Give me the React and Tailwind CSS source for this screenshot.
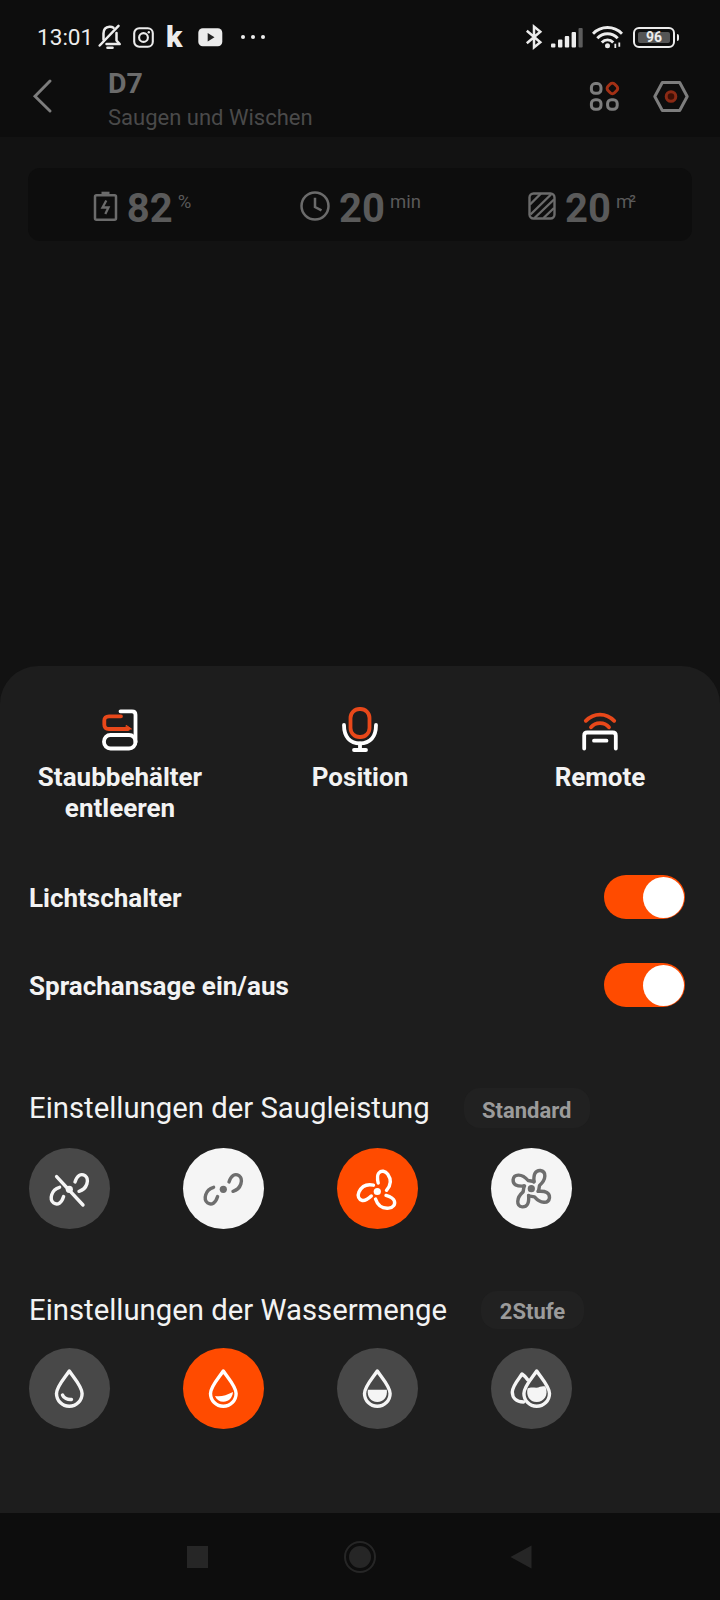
import { useState } from 'react';

const BLADE_2 = 'M46 34 C48 27.5 52 25 56 27.7 C60.5 31 58.5 41 50 43.3';
const BLADE_3 = 'M41.2 35 C40.3 31 39.8 27.3 41.8 25 C44.3 22.2 48.3 22.8 50.8 26.3 C54.8 32 53.8 37.5 49.5 42.3';
const BLADE_4 = 'M43 34 C42.3 26 44.5 22.3 49.3 22.5 C55.5 23.3 55.5 31.5 48.5 37.5 L47.5 43.4';
const DROP = 'M40.3 23 C36 29.5 27.5 38.5 27.5 45.5 A12.8 12.8 0 0 0 53.1 45.5 C53.1 38.5 44.6 29.5 40.3 23Z';

function RoundIcon({ children }) {
  return (
    <svg viewBox="0 0 81 81" className="w-full h-full" fill="none" stroke="currentColor" strokeWidth="3.4" strokeLinecap="round" strokeLinejoin="round">
      {children}
    </svg>
  );
}

function Fan({ blade, angles, cx = 40.3, cy, slash }) {
  return (
    <RoundIcon>
      {angles.map((a) => (
        <path key={a} d={blade} transform={`rotate(${a} ${cx} ${cy})`} />
      ))}
      <circle cx="40.3" cy={cy} r="3.6" fill="currentColor" stroke="none" />
      {slash && <path d="M27.6 28.6 L54 57" />}
    </RoundIcon>
  );
}

const SUCTION = [
  { id: 'Aus', style: 'bg-[#484848] text-[#f5f5f5]', icon: <Fan blade={BLADE_2} angles={[0, 180]} cy={41.3} slash /> },
  { id: 'Leise', style: 'bg-[#f5f5f5] text-[#6e6e6e]', icon: <Fan blade={BLADE_2} angles={[0, 180]} cy={41.3} /> },
  { id: 'Standard', style: 'bg-[#ff4b00] text-white', icon: <Fan blade={BLADE_3} angles={[0, 120, 240]} cx={41.5} cy={43.5} /> },
  { id: 'Turbo', style: 'bg-[#f5f5f5] text-[#6e6e6e]', icon: <Fan blade={BLADE_4} angles={[0, 90, 180, 270]} cy={40.7} /> },
];

const WATER = [
  {
    id: '1Stufe',
    style: 'bg-[#484848] text-[#f5f5f5]',
    icon: (
      <RoundIcon>
        <path d={DROP} />
        <path d="M33.5 47 C34.7 50 38.5 51.8 42.5 51.5" />
      </RoundIcon>
    ),
  },
  {
    id: '2Stufe',
    style: 'bg-[#ff4b00] text-white',
    icon: (
      <RoundIcon>
        <path d={DROP} />
        <path d="M32 48 C38 49 43 47.5 50 44 C49.5 50 45.5 53.8 40.5 53.8 C36.5 53.8 33.5 51.8 32 48Z" fill="currentColor" stroke="none" />
      </RoundIcon>
    ),
  },
  {
    id: '3Stufe',
    style: 'bg-[#484848] text-[#f5f5f5]',
    icon: (
      <RoundIcon>
        <path d={DROP} />
        <path d="M30.8 41.8 H49.8 C50.8 49 46.6 54 40.3 54 C34 54 29.8 49 30.8 41.8Z" fill="currentColor" stroke="none" />
      </RoundIcon>
    ),
  },
  {
    id: '4Stufe',
    style: 'bg-[#484848] text-[#f5f5f5]',
    icon: (
      <RoundIcon>
        <path d="M36.5 31.5 C34.8 29 32.5 27 31 26 C28.5 30 21.5 37.5 21.3 44 C21.3 49.5 25 54 32.5 54" />
        <path d={DROP} transform="translate(5.4 0)" />
        <path d="M36.6 40.5 C41 38 45 41 49 38.8 C51 38 53 38 54.4 38.5 C58 47 53 54 45.7 54 C38.5 54 34.8 47.5 36.6 40.5Z" fill="currentColor" stroke="none" />
      </RoundIcon>
    ),
  },
];

function StatusBar() {
  return (
    <div className="h-[56px] pt-[18px] pl-[37px] flex items-center text-[#ececec]">
      <span className="text-[22.6px] leading-[38px] w-[61px] pt-px">13:01</span>
      <svg className="w-[25px] h-[26px]" viewBox="0 0 25 26" fill="none" stroke="currentColor" strokeWidth="2.5" strokeLinecap="round" strokeLinejoin="round">
        <path d="M5.5 15.5 V9.5 C5.5 5 8 3 11.5 2.7 C13.3 2.6 14.5 3 15.5 3.7" />
        <path d="M18.5 9 V16.5 L21.7 20 H8.5" />
        <path d="M20.5 1.8 L1.7 21.5" />
        <path d="M9.5 23.7 H14.5" strokeWidth="2.6" />
      </svg>
      <svg className="w-[21px] h-[21px] ml-[10px]" viewBox="0 0 21 21" fill="none" stroke="currentColor" strokeWidth="2.1">
        <rect x="1.2" y="1.2" width="18.6" height="18.6" rx="5" />
        <circle cx="10.5" cy="10.5" r="4.4" />
        <circle cx="15.8" cy="5.2" r="1.2" fill="currentColor" stroke="none" />
      </svg>
      <span className="ml-[12px] w-[20px] text-[30px] leading-[38px] font-black">k</span>
      <svg className="w-[25px] h-[19px] ml-[12px]" viewBox="0 0 25 19">
        <rect x="0.3" y="0.3" width="24" height="18" rx="4.5" fill="currentColor" />
        <path d="M9.7 5 L16.5 9.2 L9.7 13.4Z" fill="#222" />
      </svg>
      <div className="flex gap-[6px] ml-[18px]">
        <span className="w-1 h-1 rounded-full bg-[#ececec]" />
        <span className="w-1 h-1 rounded-full bg-[#ececec]" />
        <span className="w-1 h-1 rounded-full bg-[#ececec]" />
      </div>
      <div className="ml-auto mr-[41px] flex items-center">
        <svg className="w-[18px] h-[26px]" viewBox="0 0 18 26" fill="none" stroke="currentColor" strokeWidth="2.5" strokeLinejoin="miter">
          <path d="M1.8 6.8 L15.3 18.3 L9 23.4 V2.6 L15.3 7.7 L1.8 19.2" />
        </svg>
        <svg className="w-[32px] h-[21px] ml-[8px]" viewBox="0 0 32 21" fill="currentColor">
          <rect x="0" y="16.5" width="4.4" height="4" rx="1" />
          <rect x="7" y="12.5" width="4.4" height="8" rx="1" />
          <rect x="13.8" y="9" width="4.4" height="11.5" rx="1" />
          <rect x="20.6" y="5" width="4.4" height="15.5" rx="1" />
          <rect x="27.5" y="1" width="4.2" height="19.5" rx="1" fill="#5c5c5c" />
        </svg>
        <svg className="w-[31px] h-[24px] ml-[9px]" viewBox="0 0 31 24" fill="none" stroke="currentColor" strokeWidth="2.9">
          <path d="M1 8.7 C9 0.5 22 0.5 30 8.7" />
          <path d="M5.3 13.3 C11 7.3 20 7.3 25.7 13.3" />
          <path d="M9.8 17.5 C13 14 18 14 21.2 17.5" />
          <circle cx="15.5" cy="20.8" r="2.5" fill="currentColor" stroke="none" />
          <path d="M23.3 23 V18.7 M27.3 17.5 V21.8" strokeWidth="1.8" />
        </svg>
        <div className="ml-[10px] w-[42px] h-[21px] border-2 border-[#ececec] rounded-md p-[3px] flex">
          <div className="flex-1 bg-[#555] rounded-xs flex items-center justify-center text-[14px] leading-none font-bold">96</div>
        </div>
        <span className="ml-[2px] w-[2px] h-[7px] bg-[#ececec] rounded-r" />
      </div>
    </div>
  );
}

function Header() {
  return (
    <header className="h-[81px] flex items-center pl-[32px] pr-[31px]">
      <svg className="w-[20px] h-[34px] -mt-px" viewBox="0 0 20 34" fill="none" stroke="#7d7d7d" strokeWidth="2.9" strokeLinecap="round">
        <path d="M18 2 L3 17.3 L18 32" />
      </svg>
      <div className="ml-[56px] mt-2">
        <h1 className="text-[28.5px] leading-[34px] font-bold text-[#6b6b6b]">D7</h1>
        <p className="text-[22px] leading-[34px] text-[#4a4a4a]">Saugen und Wischen</p>
      </div>
      <svg className="w-[32px] h-[33px] ml-auto" viewBox="0 0 32 33" fill="none" stroke="#7d7d7d" strokeWidth="3">
        <rect x="2.4" y="3.6" width="9.6" height="9.6" rx="3.8" />
        <rect x="18.8" y="3.8" width="9.2" height="9.2" rx="3" stroke="#a33015" transform="rotate(45 23.4 8.4)" />
        <rect x="2.4" y="19.7" width="9.6" height="9.6" rx="3.8" />
        <rect x="18.6" y="19.7" width="9.6" height="9.6" rx="3.8" />
      </svg>
      <svg className="w-[36px] h-[33px] ml-[32px]" viewBox="0 0 36 33" fill="none" stroke="#7d7d7d" strokeWidth="3" strokeLinejoin="round">
        <path d="M1.8 16.5 L9.3 2.5 H26.7 L34.2 16.5 L26.7 30.5 H9.3Z" />
        <circle cx="18" cy="16.5" r="4.8" stroke="#8a2a15" fill="#3d0f05" />
      </svg>
    </header>
  );
}

function Stat({ icon, value, unit }) {
  return (
    <div className="flex items-start justify-center text-[#5a5a5a]">
      <div className="mt-[23px] mr-[9px]">{icon}</div>
      <span className="mt-[21px] text-[40px] leading-[40px] font-bold">{value}</span>
      <span className="mt-[24px] ml-[5px] text-[18.5px] leading-[21px]">{unit}</span>
    </div>
  );
}

function Stats() {
  return (
    <div className="mt-[31px] mx-[28px] h-[73px] pl-1 rounded-xl bg-[#0d0d0d] grid grid-cols-[220px_217px_1fr]">
      <Stat
        value="82"
        unit="%"
        icon={
          <svg className="w-[25px] h-[31px]" viewBox="0 0 25 31" fill="none" stroke="#6b6b6b" strokeWidth="2.5">
            <rect x="2" y="4.2" width="21" height="24.6" rx="1.5" />
            <path d="M8.5 2.2 H16.5" strokeWidth="3" />
            <path d="M13.3 9.5 L9.5 16.5 H15.5 L12.3 23" strokeWidth="2.3" />
          </svg>
        }
      />
      <Stat
        value="20"
        unit="min"
        icon={
          <svg className="w-[30px] h-[30px]" viewBox="0 0 30 30" fill="none" stroke="#6b6b6b" strokeWidth="2.5">
            <circle cx="15" cy="15" r="13.5" />
            <path d="M15 6.8 V16 L21.5 19.3" />
          </svg>
        }
      />
      <Stat
        value="20"
        unit={<span className="tracking-[-3px]">m²</span>}
        icon={
          <svg className="w-[28px] h-[30px]" viewBox="0 0 28 30" fill="none" stroke="#6b6b6b" strokeWidth="2.4">
            <rect x="1.5" y="2.5" width="25" height="25" rx="4" />
            <path d="M2 13.5 L13 2.5 M2.5 23.5 L23 3.5 M6.5 27 L26 8.5 M15.5 27 L26 17" />
          </svg>
        }
      />
    </div>
  );
}

const ACTIONS = [
  {
    label: 'Staubbehälter entleeren',
    icon: (
      <svg className="w-[36px] h-[42px]" viewBox="0 0 36 42" fill="none" stroke="#fff" strokeWidth="3.8" strokeLinecap="round" strokeLinejoin="round">
        <path d="M18.5 2.3 H30 Q33.5 2.3 33.5 5.8 V33" />
        <rect x="2" y="26" width="31.5" height="13.5" rx="6.5" />
        <path d="M19 7.3 H7 Q2.3 7.3 2.3 11.5 V15.5 Q2.3 20 7 20 H26" stroke="#e8481a" />
        <path d="M24.5 16.5 L29.5 20 H24.5Z" fill="#e8481a" stroke="#e8481a" strokeWidth="1" />
      </svg>
    ),
  },
  {
    label: 'Position',
    icon: (
      <svg className="w-[36px] h-[45px]" viewBox="0 0 36 45" fill="none" stroke="#fff" strokeWidth="3.8" strokeLinecap="round">
        <rect x="8.5" y="2" width="19" height="28" rx="9" stroke="#e8481a" />
        <path d="M2 18 C2 30 8 36.3 18 36.3 C28 36.3 34 30 34 18" />
        <path d="M18 36.5 V43 M12 43 H24" />
      </svg>
    ),
  },
  {
    label: 'Remote',
    icon: (
      <svg className="w-[36px] h-[39px] mt-[3px]" viewBox="0 0 36 39" fill="none" stroke="#fff" strokeWidth="3.8" strokeLinecap="round" strokeLinejoin="round">
        <path d="M3.8 8.8 C12 0.5 24 0.5 32.2 8.8 M9 15.3 C13.5 9.8 22.5 9.8 27 15.3" stroke="#e8481a" />
        <path d="M2.2 36.5 V23.5 Q2.2 20.5 5.2 20.5 H30.8 Q33.8 20.5 33.8 23.5 V36.5 M12 28.7 H24.5" />
      </svg>
    ),
  },
];

function ToggleRow({ label }) {
  const [on, setOn] = useState(true);
  return (
    <div className="h-[88px] pl-[29px] pr-[35px] flex items-center justify-between">
      <span className="pt-[3px] text-[26px] font-bold">{label}</span>
      <button
        type="button"
        role="switch"
        aria-checked={on}
        aria-label={label}
        onClick={() => setOn(!on)}
        className={on ? 'w-[81px] h-[44px] p-[1.5px] rounded-full flex justify-end bg-[#ff4b00]' : 'w-[81px] h-[44px] p-[1.5px] rounded-full flex justify-start bg-[#484848]'}
      >
        <span className="w-[41px] h-[41px] rounded-full bg-white" />
      </button>
    </div>
  );
}

function LevelHeading({ title, children }) {
  return (
    <div className="h-[40px] pl-[29px] flex items-center">
      <h2 className="text-[29.3px] leading-[40px]">{title}</h2>
      {children}
    </div>
  );
}

function LevelRow({ items }) {
  return (
    <div className="pl-[29px] flex gap-[73px]">
      {items.map((item) => (
        <button key={item.id} type="button" aria-label={item.id} className={`w-[81px] h-[81px] rounded-full ${item.style}`}>
          {item.icon}
        </button>
      ))}
    </div>
  );
}

export default function App() {
  return (
    <div className="w-[720px] h-[1600px] flex flex-col bg-[#121212] font-['Roboto',sans-serif] overflow-hidden">
      <div className="bg-[#0d0d0d]">
        <StatusBar />
        <Header />
      </div>
      <Stats />
      <main className="mt-auto h-[847px] shrink-0 rounded-t-[38px] bg-[#1d1d1d] text-[#f3f3f3] pt-[41px]">
        <div className="grid grid-cols-3 h-[117px]">
          {ACTIONS.map((a) => (
            <div key={a.label} className="flex flex-col items-center">
              <div className="h-[45px] flex items-center">{a.icon}</div>
              <span className="mt-[10px] w-[190px] text-center text-[26px] leading-[31px] font-bold">{a.label}</span>
            </div>
          ))}
        </div>
        <div className="mt-[29px]">
          <ToggleRow label="Lichtschalter" />
          <ToggleRow label="Sprachansage ein/aus" />
        </div>
        <section className="mt-[59px]">
          <LevelHeading title="Einstellungen der Saugleistung">
            <span className="ml-[34px] w-[126px] h-[40px] pt-[3px] rounded-2xl bg-[#212121] text-[#9b9b9b] text-[22px] leading-[40px] font-bold text-center">Standard</span>
          </LevelHeading>
          <div className="mt-[20px]">
            <LevelRow items={SUCTION} />
          </div>
        </section>
        <section className="mt-[61px]">
          <LevelHeading title="Einstellungen der Wassermenge">
            <span className="ml-[34px] w-[103px] h-[38px] pt-[2px] rounded-2xl bg-[#212121] text-[#9b9b9b] text-[22px] leading-[38px] font-bold text-center">2Stufe</span>
          </LevelHeading>
          <div className="mt-[18px]">
            <LevelRow items={WATER} />
          </div>
        </section>
      </main>
      <nav className="h-[87px] shrink-0 bg-[#0d0d0d] flex items-center justify-between pl-[187px] pr-[188px]">
        <span className="w-[21px] h-[22px] bg-[#262626]" />
        <span className="w-[32px] h-[32px] ml-[2px] rounded-full border-2 border-[#262626] p-[3px] flex">
          <span className="flex-1 rounded-full bg-[#262626]" />
        </span>
        <svg className="w-[22px] h-[24px]" viewBox="0 0 22 24">
          <path d="M0.5 12 L21.5 0.5 V23.5Z" fill="#262626" />
        </svg>
      </nav>
    </div>
  );
}
